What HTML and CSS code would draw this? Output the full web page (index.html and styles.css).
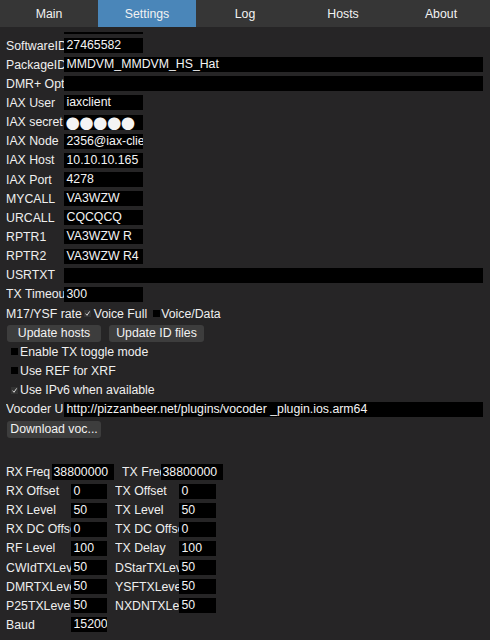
FILE: index.html
```html
<!DOCTYPE html>
<html lang="en">
<head>
<meta charset="utf-8">
<title>Settings</title>
<link rel="stylesheet" href="styles.css">
</head>
<body>
<nav class="tabs">
  <div class="tab">Main</div>
  <div class="tab active">Settings</div>
  <div class="tab">Log</div>
  <div class="tab">Hosts</div>
  <div class="tab">About</div>
</nav>
<main class="page">
  <div class="stub"></div>
  <section class="form">
    <div class="row"><span class="lbl">SoftwareID</span><span class="field">27465582</span></div>
    <div class="row"><span class="lbl">PackageID</span><span class="field wide">MMDVM_MMDVM_HS_Hat</span></div>
    <div class="row"><span class="lbl">DMR+ Options</span><span class="field wide"></span></div>
    <div class="row"><span class="lbl">IAX User</span><span class="field">iaxclient</span></div>
    <div class="row"><span class="lbl">IAX secret</span><span class="field dots">●●●●●</span></div>
    <div class="row"><span class="lbl">IAX Node</span><span class="field">2356@iax-client</span></div>
    <div class="row"><span class="lbl">IAX Host</span><span class="field">10.10.10.165</span></div>
    <div class="row"><span class="lbl">IAX Port</span><span class="field">4278</span></div>
    <div class="row"><span class="lbl">MYCALL</span><span class="field">VA3WZW</span></div>
    <div class="row"><span class="lbl">URCALL</span><span class="field">CQCQCQ</span></div>
    <div class="row"><span class="lbl">RPTR1</span><span class="field">VA3WZW R</span></div>
    <div class="row"><span class="lbl">RPTR2</span><span class="field">VA3WZW R4</span></div>
    <div class="row"><span class="lbl">USRTXT</span><span class="field wide"></span></div>
    <div class="row"><span class="lbl">TX Timeout</span><span class="field">300</span></div>
    <div class="row">
      <span class="lbl-auto">M17/YSF rate</span>
      <span class="cb checked rate-cb1"><svg viewBox="0 0 7 7" width="7" height="7"><path d="M1.6 3.6 L3 5.3 L5.6 1.4" fill="none" stroke="#e6e6e6" stroke-width="0.9"/></svg></span>
      <span class="opt1">Voice Full</span>
      <span class="cb rate-cb2"></span>
      <span class="opt2">Voice/Data</span>
    </div>
    <div class="row btnrow">
      <button class="btn">Update hosts</button>
      <button class="btn">Update ID files</button>
    </div>
    <div class="row check"><span class="cb"></span><span>Enable TX toggle mode</span></div>
    <div class="row check"><span class="cb"></span><span>Use REF for XRF</span></div>
    <div class="row check"><span class="cb checked"><svg viewBox="0 0 7 7" width="7" height="7"><path d="M1.6 3.6 L3 5.3 L5.6 1.4" fill="none" stroke="#e6e6e6" stroke-width="0.9"/></svg></span><span>Use IPv6 when available</span></div>
    <div class="row"><span class="lbl">Vocoder URL</span><span class="field wide">http://pizzanbeer.net/plugins/vocoder _plugin.ios.arm64</span></div>
    <div class="row btnrow"><button class="btn">Download voc...</button></div>
  </section>
  <section class="form radio">
    <div class="row first">
      <span class="lbl l1">RX Freq</span><span class="field f1">38800000</span>
      <span class="lbl l1b">TX Freq</span><span class="field f1">38800000</span>
    </div>
    <div class="row"><span class="lbl l2">RX Offset</span><span class="field f2">0</span><span class="lbl l2b">TX Offset</span><span class="field f2b">0</span></div>
    <div class="row"><span class="lbl l2">RX Level</span><span class="field f2">50</span><span class="lbl l2b">TX Level</span><span class="field f2b">50</span></div>
    <div class="row"><span class="lbl l2">RX DC Offset</span><span class="field f2">0</span><span class="lbl l2b">TX DC Offset</span><span class="field f2b">0</span></div>
    <div class="row"><span class="lbl l2">RF Level</span><span class="field f2">100</span><span class="lbl l2b">TX Delay</span><span class="field f2b">100</span></div>
    <div class="row"><span class="lbl l2">CWIdTXLevel</span><span class="field f2">50</span><span class="lbl l2b">DStarTXLevel</span><span class="field f2b">50</span></div>
    <div class="row"><span class="lbl l2">DMRTXLevel</span><span class="field f2">50</span><span class="lbl l2b">YSFTXLevel</span><span class="field f2b">50</span></div>
    <div class="row"><span class="lbl l2">P25TXLevel</span><span class="field f2">50</span><span class="lbl l2b">NXDNTXLevel</span><span class="field f2b">50</span></div>
    <div class="row"><span class="lbl l2">Baud</span><span class="field f2">15200</span></div>
  </section>
</main>
</body>
</html>
```
FILE: styles.css
```css
* { box-sizing: border-box; }
html, body {
  margin: 0;
  padding: 0;
  background: #262526;
}
body {
  width: 490px;
  height: 640px;
  overflow: hidden;
  color: #efefef;
  font-family: "Liberation Sans", Arial, sans-serif;
  font-size: 12.3px;
}
.tabs {
  display: grid;
  grid-template-columns: repeat(5, 98px);
  height: 27px;
  background: #363636;
}
.tab {
  display: flex;
  align-items: center;
  justify-content: center;
  color: #f2f2f2;
  font-size: 12.3px;
}
.tab.active {
  background: #4a86b9;
}
.page {
  padding-left: 6px;
}
.stub {
  margin-top: 5px;
  margin-left: 58px;
  width: 79px;
  height: 2px;
  background: #000;
  margin-bottom: 2px;
}
.form {
  display: flex;
  flex-direction: column;
}
.row {
  display: flex;
  align-items: center;
  height: 19.15px;
  flex: none;
  white-space: nowrap;
}
.lbl {
  width: 58px;
  flex: none;
  overflow: hidden;
  white-space: nowrap;
}
.field {
  display: block;
  flex: none;
  width: 79px;
  height: 15px;
  line-height: 15px;
  padding-left: 2.5px;
  background: #000;
  color: #f4f4f4;
  overflow: hidden;
  white-space: nowrap;
}
.field.wide {
  width: 419px;
}
.field.dots {
  font-family: "DejaVu Sans", sans-serif;
  font-size: 16.5px;
  letter-spacing: -0.6px;
  line-height: 15px;
  padding-left: 1.5px;
}
.lbl-auto {
  flex: none;
}
.cb {
  display: inline-block;
  flex: none;
  width: 7px;
  height: 7px;
  background: #000;
}
.cb svg { display: block; }
.cb.checked {
  background: #333;
}
.rate-cb1 { margin-left: 2px; }
.opt1 { margin-left: 3px; }
.rate-cb2 { margin-left: 6px; }
.opt2 { margin-left: 1px; }
.check .cb {
  margin-left: 5px;
  margin-right: 2px;
}
.btnrow {
  align-items: flex-end;
  gap: 8px;
}
.btn {
  width: 94px;
  height: 17px;
  margin: 0 0 0 1px;
  padding: 0;
  border: none;
  border-radius: 3px;
  background: #3d3d3d;
  color: #f2f2f2;
  font-family: "Liberation Sans", Arial, sans-serif;
  font-size: 12.3px;
  line-height: 17px;
  text-align: center;
}
.btnrow .btn + .btn { margin-left: 0; width: 95px; }
.radio {
  margin-top: 24.35px;
}
.l1 { width: 46px; letter-spacing: -0.3px; }
.l1b { width: 39px; margin-left: 8px; }
.field.f1 { width: 62px; height: 16px; line-height: 16px; padding-left: 1.5px; }
.l2 { width: 65px; }
.l2b { width: 64px; margin-left: 8px; }
.field.f2 { width: 36px; }
.field.f2b { width: 37px; }
```
